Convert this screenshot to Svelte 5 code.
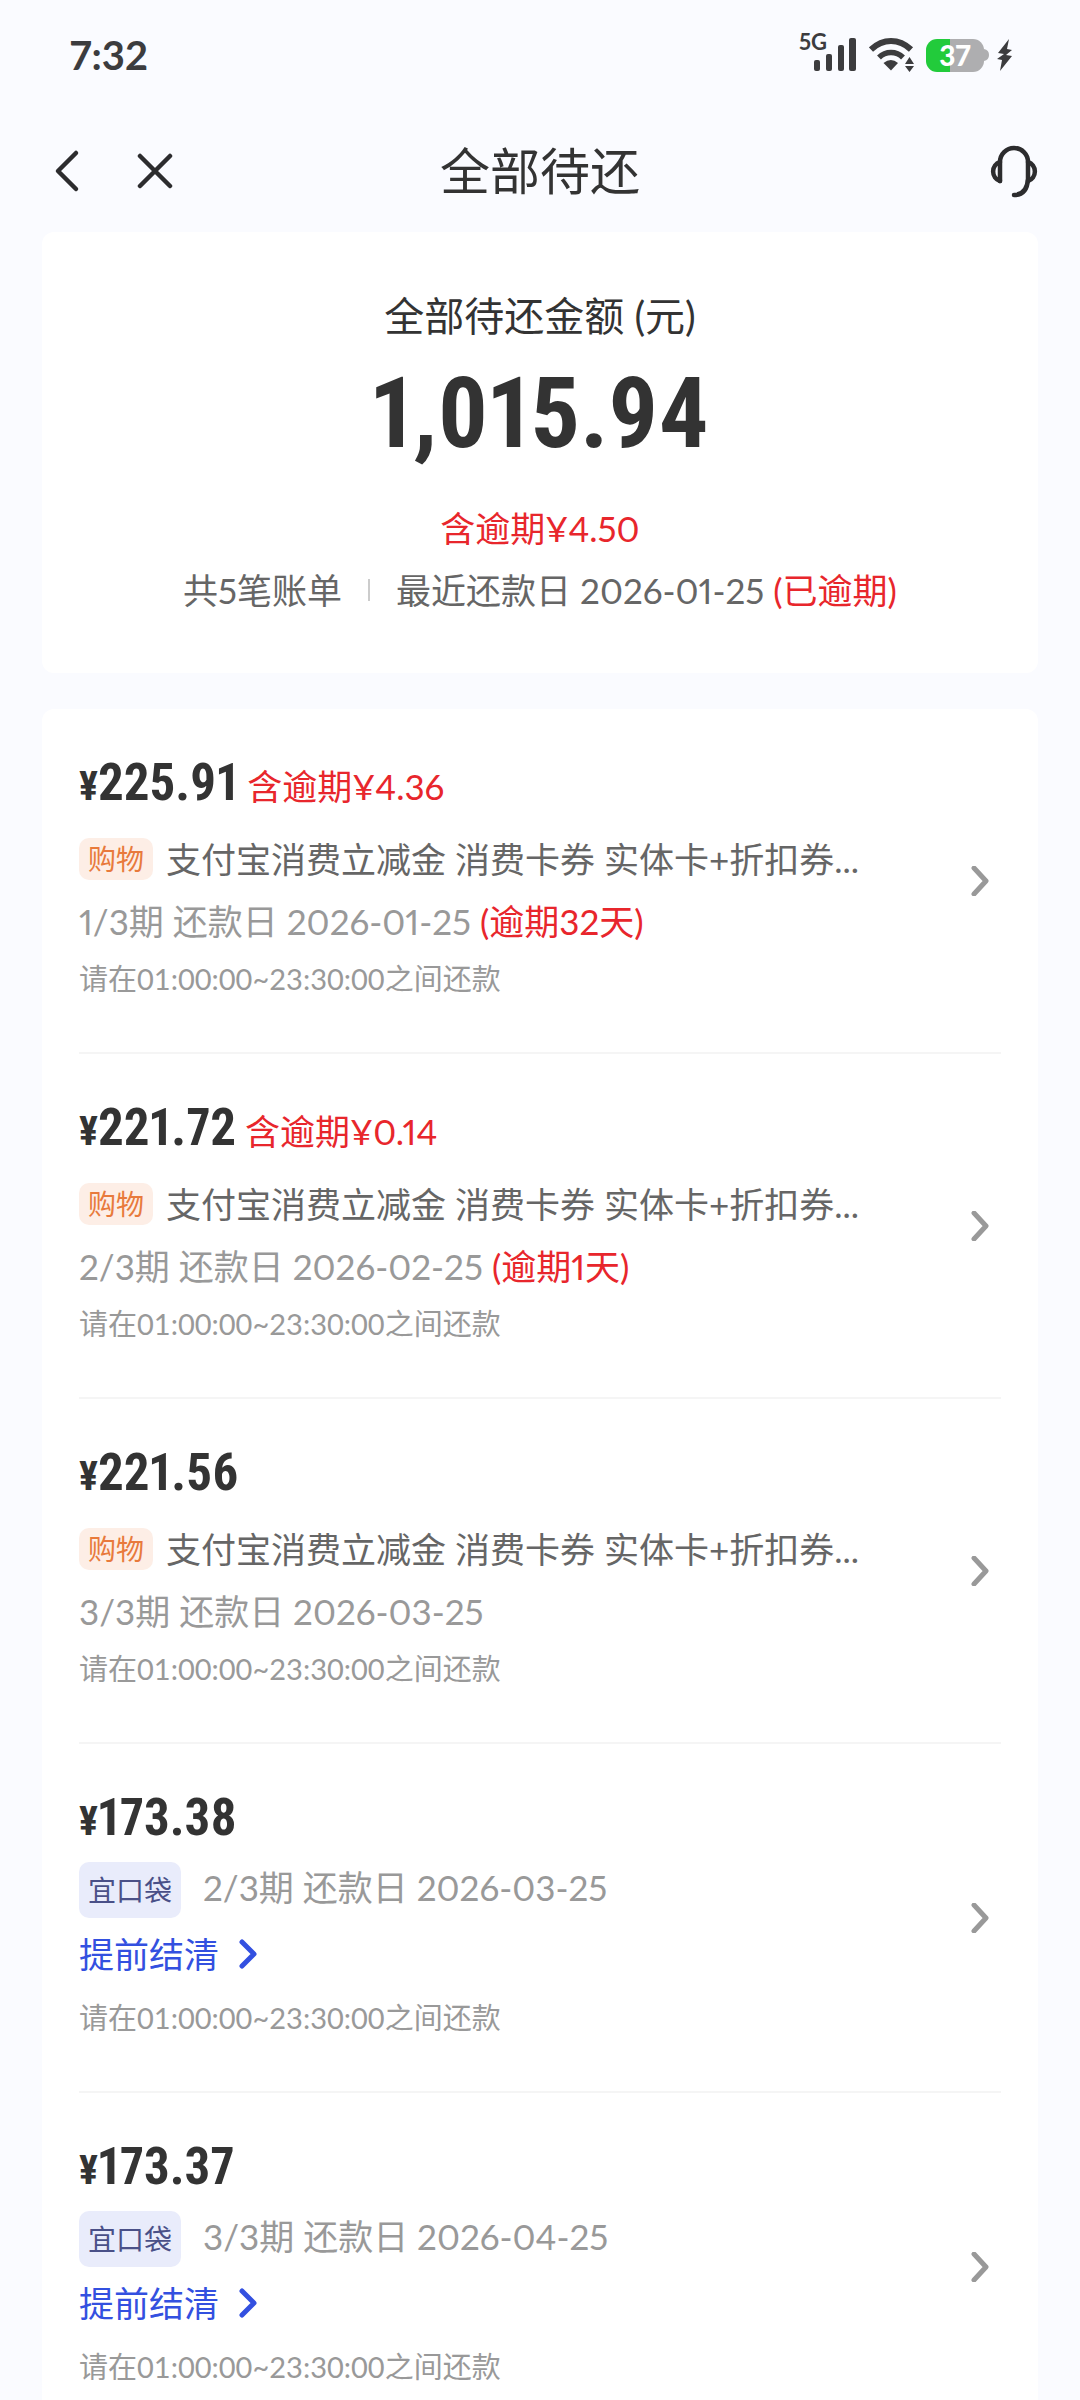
<script lang="ts">
  type Bill = {
    amount: string;
    overdue?: string;
    title?: string;
    tag: string;
    term: string;
    date: string;
    late?: string;
    settle?: boolean;
  };

  const goods = '支付宝消费立减金 消费卡券 实体卡+折扣券...';
  const note = '请在01:00:00~23:30:00之间还款';

  const bills: Bill[] = [
    { amount: '225.91', overdue: '4.36', title: goods, tag: '购物', term: '1/3期', date: '2026-01-25', late: '(逾期32天)' },
    { amount: '221.72', overdue: '0.14', title: goods, tag: '购物', term: '2/3期', date: '2026-02-25', late: '(逾期1天)' },
    { amount: '221.56', title: goods, tag: '购物', term: '3/3期', date: '2026-03-25' },
    { amount: '173.38', tag: '宜口袋', term: '2/3期', date: '2026-03-25', settle: true },
    { amount: '173.37', tag: '宜口袋', term: '3/3期', date: '2026-04-25', settle: true }
  ];
</script>

<div class="page">
  <div class="status">
    <span class="clock">7:32</span>
    <div class="indicators">
      <span class="net">5G</span>
      <svg class="signal" width="42" height="34" viewBox="0 0 42 34" fill="#3c3c3e">
        <rect x="0" y="22" width="6" height="11" rx="2" />
        <rect x="12" y="16" width="6" height="17" rx="2" />
        <rect x="24" y="7" width="6" height="26" rx="2" />
        <rect x="35" y="0" width="7" height="33" rx="2" />
      </svg>
      <svg class="wifi" width="46" height="34" viewBox="0 0 46 34" fill="none" stroke="#3c3c3e">
        <path d="M2 11.5Q11 3 22 3T42 11.5" stroke-width="6" />
        <path d="M10 19.5Q15 14.5 22 14.5T34 19.5" stroke-width="5.5" />
        <path d="M14.5 25Q22 19 29 25L22 32.5Z" fill="#3c3c3e" stroke="none" />
        <path d="M36 26L40.500 19L45 26ZM36 28L40.500 34L45 28Z" fill="#3c3c3e" stroke="none" />
      </svg>
      <span class="battery">37</span>
      <svg class="nub" width="5" height="12" viewBox="0 0 5 12"><path d="M0 0Q5 1 5 6T0 12Z" fill="#aeaeb0" /></svg>
      <svg class="bolt" width="16" height="32" viewBox="0 0 16 32">
        <path d="M12 0L1 14L7 15L0 20L5 21L3 32L15 17L9 16L15 11L10 10Z" fill="#3c3c3e" />
      </svg>
    </div>
  </div>

  <header>
    <div class="nav">
      <button aria-label="返回">
        <svg width="28" height="44" viewBox="0 0 28 44"><path d="M23 4L5 22L23 40" /></svg>
      </button>
      <button aria-label="关闭">
        <svg width="36" height="44" viewBox="0 0 36 44"><path d="M3 7L33 37M33 7L3 37" /></svg>
      </button>
    </div>
    <h1>全部待还</h1>
    <button class="service" aria-label="客服">
      <svg width="52" height="54" viewBox="0 0 52 54">
        <path d="M12 37V18A14 14 0 0 1 40 18V35Q39 51 26 51" />
        <path d="M12 18A10 10 0 0 0 12 37" />
        <path d="M40 18A10 10 0 0 1 40 37" />
      </svg>
    </button>
  </header>

  <main>
    <section class="card summary">
      <h2>全部待还金额 (元)</h2>
      <p class="total">1,015.94</p>
      <p class="red">含逾期¥4.50</p>
      <p class="meta">
        <span>共5笔账单</span>
        <i class="bar"></i>
        <span>最近还款日 2026-01-25 <span class="red">(已逾期)</span></span>
      </p>
    </section>

    <section class="card list">
      {#each bills as bill}
        <article>
          <div class="info">
            <p class="amount">
              <span class="yen">¥</span><strong>{bill.amount}</strong>
              {#if bill.overdue}
                <span class="red">含逾期¥{bill.overdue}</span>
              {/if}
            </p>
            {#if bill.title}
              <p class="row goods"><span class="tag">{bill.tag}</span>{bill.title}</p>
              <p class="row">
                {bill.term} 还款日 {bill.date}
                {#if bill.late}<span class="red">{bill.late}</span>{/if}
              </p>
            {:else}
              <p class="row pocket"><span class="tag blue">{bill.tag}</span>{bill.term} 还款日 {bill.date}</p>
            {/if}
            {#if bill.settle}
              <a class="settle" href="#settle">
                提前结清
                <svg width="18" height="30" viewBox="0 0 18 30"><path d="M3 3L15 15L3 27" /></svg>
              </a>
            {/if}
            <p class="note">{note}</p>
          </div>
          <button class="more" aria-label="查看详情">
            <svg width="18" height="30" viewBox="0 0 18 30"><path d="M3 2L15 15L3 28" /></svg>
          </button>
        </article>
      {/each}
    </section>
  </main>
</div>

<style>
  :global(body) {
    background: #fafbff;
  }
  .page {
    display: flex;
    flex-direction: column;
    height: 100vh;
    overflow: hidden;
    color: #333;
    font-family: Lato, "Noto Sans CJK SC", sans-serif;
    font-size: 35px;
    font-variant-numeric: proportional-nums;
    line-height: 48px;
  }
  h1, h2, p {
    margin: 0;
    font-weight: 400;
  }
  button {
    display: flex;
    padding: 0;
    border: 0;
    background: none;
  }
  svg {
    display: block;
    flex: none;
  }

  /* status bar */
  .status {
    display: flex;
    flex: none;
    justify-content: space-between;
    align-items: center;
    height: 110px;
    padding: 0 67px 0 70px;
    color: #3c3c3e;
    font-weight: 700;
  }
  .clock {
    font-size: 40px;
  }
  .indicators {
    display: flex;
    align-items: center;
  }
  .net {
    align-self: flex-start;
    margin-right: -13px;
    font-size: 22px;
    line-height: 8px;
  }
  .wifi {
    margin-left: 13px;
  }
  .battery {
    width: 58px;
    height: 33px;
    margin-left: 11px;
    border-radius: 11px;
    background: linear-gradient(90deg, #22cb3b 42%, #aeaeb0 42%);
    color: #fff;
    font-size: 28px;
    font-weight: 900;
    line-height: 33px;
    text-align: center;
  }
  .bolt {
    margin-left: 8px;
  }

  /* title bar */
  header {
    display: grid;
    flex: none;
    grid-template-columns: 1fr auto 1fr;
    align-items: center;
    height: 122px;
    padding: 0 40px;
  }
  header svg {
    fill: none;
    stroke: #2c2c2e;
    stroke-width: 4.5;
    stroke-linecap: round;
    stroke-linejoin: round;
  }
  .nav {
    display: flex;
    gap: 56px;
    padding-left: 13px;
  }
  h1 {
    font-size: 50px;
    line-height: 64px;
  }
  .service {
    justify-self: end;
  }

  main {
    flex: 1;
    min-height: 0;
    padding: 0 42px;
    overflow-y: auto;
    scrollbar-width: none;
  }
  .card {
    border-radius: 12px;
    background: #fff;
  }
  .red {
    color: #e8262c;
  }

  .summary {
    margin-bottom: 36px;
    padding: 56px 0 59px;
    text-align: center;
  }
  h2 {
    font-size: 40px;
    line-height: 56px;
  }
  .total {
    margin: 18px 0 38px;
    font-family: "Roboto Condensed", Roboto, sans-serif;
    font-size: 98px;
    font-weight: 700;
    line-height: 104px;
  }
  .meta {
    display: flex;
    justify-content: center;
    align-items: center;
    margin-top: 14px;
    color: #666;
  }
  .bar {
    width: 2px;
    height: 22px;
    margin: 0 26px;
    background: #ccc;
  }

  .list {
    padding: 0 37px;
  }
  article {
    display: flex;
    justify-content: space-between;
    align-items: center;
    padding-right: 12px;
    border-bottom: 2px solid #f5f5f5;
  }
  .info {
    padding: 42px 0 53px;
  }
  .amount {
    line-height: 64px;
  }
  .amount strong,
  .yen {
    font-family: "Roboto Condensed", Roboto, sans-serif;
    font-weight: 700;
  }
  .amount strong {
    font-size: 51px;
  }
  .yen {
    font-size: 40px;
  }
  .row {
    margin-bottom: 14px;
    color: #999;
  }
  .goods,
  .pocket {
    display: flex;
    align-items: center;
  }
  .goods {
    margin-top: 16px;
    color: #666;
  }
  .pocket {
    align-items: flex-start;
    margin: 8px 0 12px;
    line-height: 50px;
  }
  .tag {
    margin-right: 13px;
    padding: 0 9px;
    border-radius: 10px;
    background: #fdeee6;
    color: #e87a3c;
    font-size: 28px;
    line-height: 42px;
  }
  .tag.blue {
    margin-right: 22px;
    background: #e9ecfb;
    color: #4a5088;
    line-height: 56px;
  }
  .settle {
    display: flex;
    align-items: center;
    gap: 20px;
    margin-bottom: 20px;
    color: #3350e0;
    text-decoration: none;
  }
  .settle svg,
  .more svg {
    fill: none;
    stroke: currentColor;
    stroke-width: 5;
    stroke-linecap: round;
    stroke-linejoin: round;
  }
  .note {
    color: #999;
    font-size: 29px;
    font-variant-numeric: tabular-nums;
    line-height: 40px;
  }
  .more {
    color: #999;
  }
</style>
